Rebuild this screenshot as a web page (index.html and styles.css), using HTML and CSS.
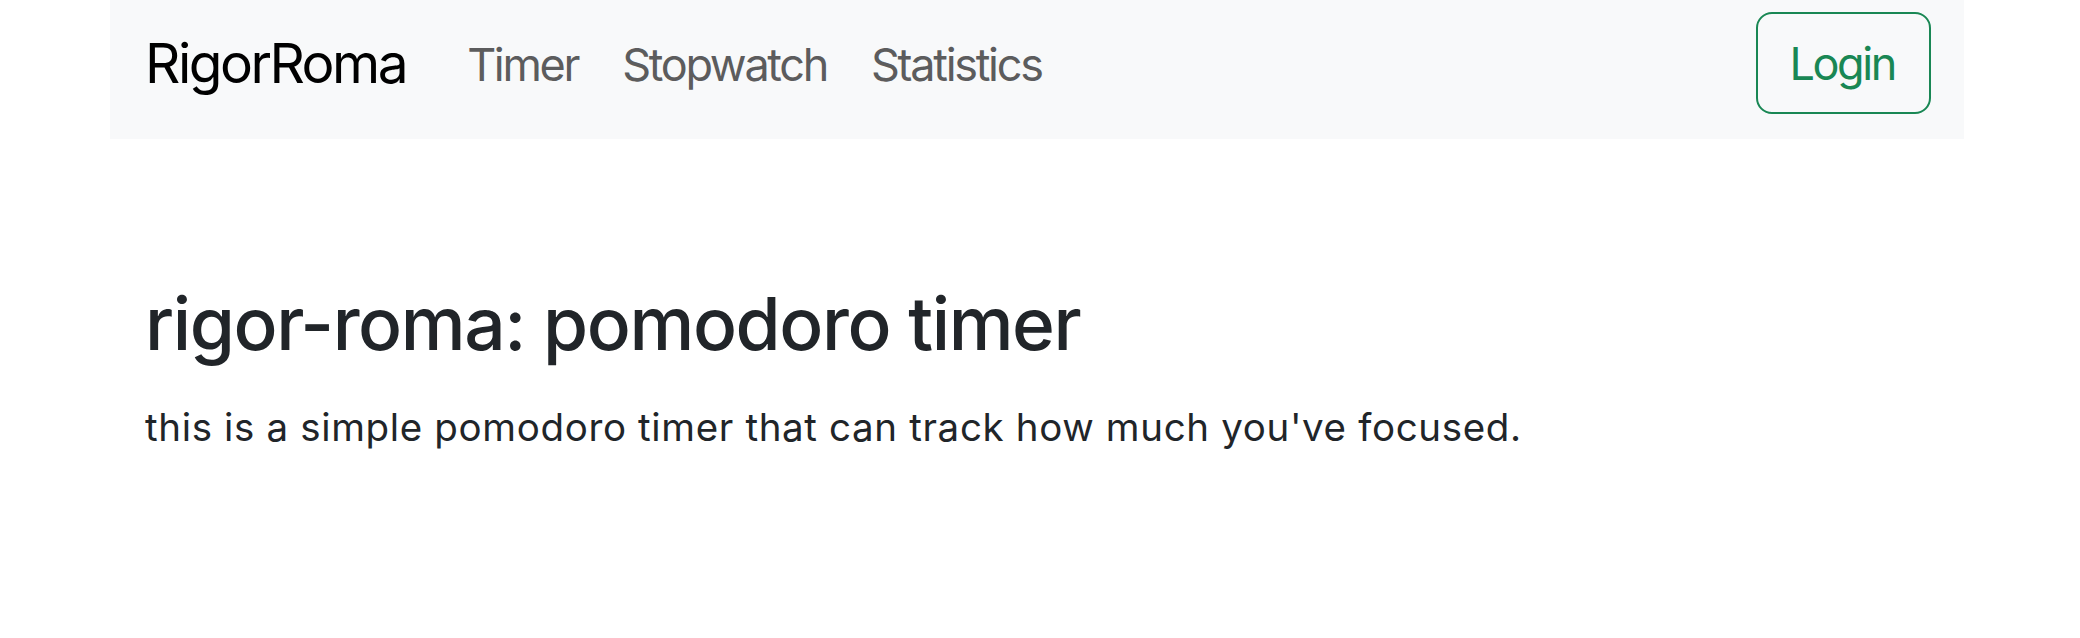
FILE: index.html
```html
<!DOCTYPE html>
<html lang="en">
<head>
<meta charset="utf-8">
<title>RigorRoma</title>
<link rel="stylesheet" href="styles.css">
</head>
<body>
<nav class="navbar">
  <a class="brand" href="#">RigorRoma</a>
  <ul class="nav-links">
    <li><a href="#">Timer</a></li>
    <li><a href="#">Stopwatch</a></li>
    <li><a href="#">Statistics</a></li>
  </ul>
  <a class="btn-login" href="#">Login</a>
</nav>
<main class="content">
  <h1 class="title">rigor-roma: pomodoro timer</h1>
  <p class="lead">this is a simple pomodoro timer that can track how much you've focused.</p>
</main>
</body>
</html>
```
FILE: styles.css
```css
html, body {
  margin: 0;
  padding: 0;
  background: #ffffff;
}
body {
  font-family: Inter, "Noto Sans", "Liberation Sans", sans-serif;
  color: #212529;
}
.navbar {
  display: flex;
  align-items: center;
  height: 139px;
  box-sizing: border-box;
  margin: 0 116px 0 110px;
  padding: 12px 33px 25px 35px;
  background: #f8f9fa;
}
.brand {
  font-size: 55px;
  line-height: 60px;
  letter-spacing: -2.5px;
  color: #000000;
  text-decoration: none;
  margin-right: 61px;
}
.nav-links {
  display: flex;
  gap: 44px;
  list-style: none;
  margin: 0;
  padding: 3px 0 0;
  flex: 1;
}
.nav-links a {
  font-size: 45px;
  line-height: 54px;
  letter-spacing: -2.3px;
  color: #5c5c5d;
  text-decoration: none;
}
.btn-login {
  display: block;
  font-size: 45px;
  line-height: 54px;
  letter-spacing: -2.4px;
  padding: 23px 34px 21px 31px;
  border: 2px solid #198754;
  border-radius: 16px;
  color: #198754;
  text-decoration: none;
}
.content {
  padding: 0 145px;
}
.title {
  margin: 0;
  padding-top: 141px;
  font-size: 73px;
  font-weight: 500;
  line-height: 88px;
  letter-spacing: -1.4px;
}
.lead {
  margin: 0;
  padding-top: 37px;
  font-size: 38.5px;
  line-height: 44px;
  letter-spacing: 0.65px;
  font-weight: 400;
}
```
